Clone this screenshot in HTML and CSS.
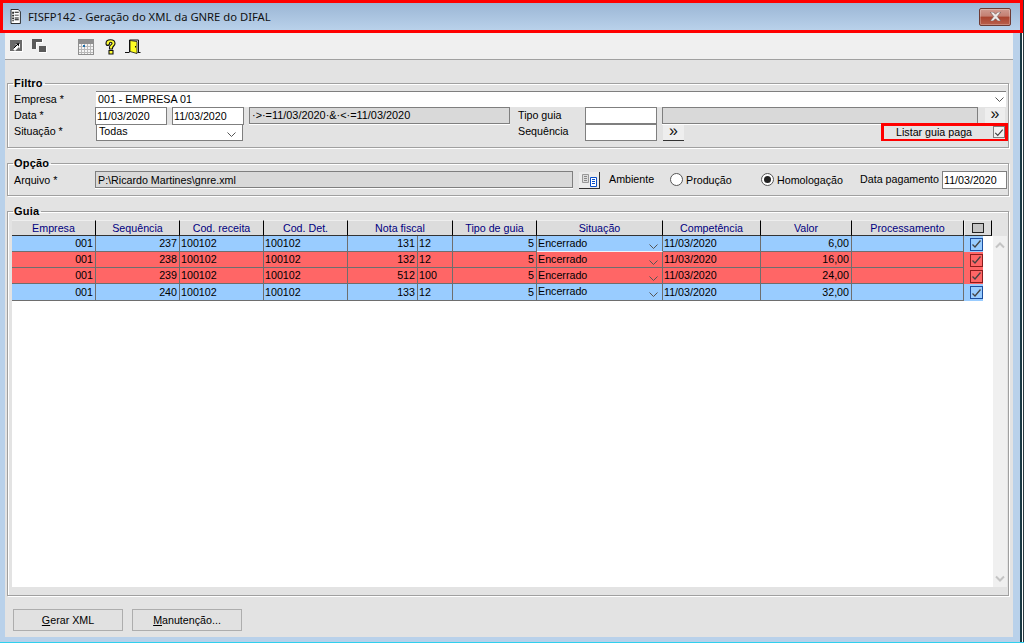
FILE: index.html
```html
<!DOCTYPE html>
<html lang="pt">
<head>
<meta charset="utf-8">
<title>FISFP142</title>
<link rel="stylesheet" href="styles.css">
</head>
<body>
<div class="window">
  <header class="titlebar">
    <svg class="doc-icon" width="13" height="15" viewBox="0 0 16 16" preserveAspectRatio="none"><path d="M2.500.5h9l2.500 2.500v12.500h-11.500z" fill="#fff" stroke="#111"/><path d="M4 3h2v2h-2zM7 3h5v1h-5zM4 6h2v2h-2zM7 6h5v1h-5zM4 9h2v2h-2zM7 9h5v1h-5zM7 11h5v1h-5zM4 12h2v1h-2z" fill="#111"/></svg>
    <span class="title-text">FISFP142 - Geração do XML da GNRE do DIFAL</span>
    <button class="close" aria-label="Fechar"><svg width="13" height="9" viewBox="0 0 14 10"><path d="M1 0h3.500l2.500 2.500 2.500-2.500h3.500l-4 5 4 5h-3.500l-2.500-2.500-2.500 2.500h-3.500l4-5z" fill="#eeeae8" stroke="#6e5550" stroke-width=".7"/></svg></button>
  </header>
  <div class="frame">
    <nav class="toolbar">
      <svg class="ti ti-a" width="14" height="14" viewBox="0 0 14 14"><path d="M0 1h12v11h-12z" fill="#6a6a6a"/><path d="M12 1h1v12h-13v-1h12z" fill="#fff"/><path d="M3 10l4-4-2-1h5v5l-1-2-4 4z" fill="#fff"/><path d="M3.500 9.500l5-5" stroke="#000" stroke-width="1"/><path d="M6 4.500h3v3z" fill="#000"/></svg>
      <svg class="ti ti-b" width="15" height="15" viewBox="0 0 15 15"><path d="M0 0h10v3h-6v7h-4z" fill="#5a5a5a"/><path d="M4 3h6v-3h1v4h-6v6h-1z" fill="#fff"/><path d="M7 7h7v6h-7z" fill="#5a5a5a"/><path d="M14 7h1v7h-8v-1h7z" fill="#fff"/></svg>
      <svg class="ti ti-c" width="16" height="16" viewBox="0 0 16 16"><path d="M0 0h16v16h-16z" fill="#8f8f8f"/><path d="M1 5h14v10h-14z" fill="#f4f4f4"/><path d="M3.500 5v10M6.500 5v10M9.500 5v10M12.500 5v10M1 7.500h14M1 10.500h14M1 13.500h14" stroke="#b8b8b8" fill="none"/><path d="M5 6h2v2h-2z" fill="#1c6ea8"/></svg>
      <svg class="ti ti-d" width="13" height="16" viewBox="0 0 12 16"><path d="M3.500 6.500c-1.300 0-2-.7-2-2 0-2.300 2-3.800 4.500-3.800s4.500 1.500 4.500 3.800c0 2.200-2.500 2.700-2.500 4.500v1h-3v-2c0-2 2.500-2.500 2.500-3.500 0-.8-.6-1.300-1.500-1.300-1 0-1 1-1 1.300 0 .8-.8 2-2.500 2zM4.500 11.500h4v3.500h-4z" fill="#ffff33" stroke="#111" stroke-width="1.100"/></svg>
      <svg class="ti ti-e" width="16" height="16" viewBox="0 0 16 16"><path d="M4.500 13v-12h9v12" fill="none" stroke="#111"/><path d="M5 1.500l7 1v12l-7-2z" fill="#ffff22" stroke="#111" stroke-width=".8"/><path d="M0 13.500h4.500M12.500 13.500h3" stroke="#111"/><path d="M10 7h1v1.500h-1z" fill="#111"/></svg>
    </nav>
    <main class="main">
      <fieldset class="group group-filtro">
        <legend>Filtro</legend>
        <div class="row row-a">
          <label class="lbl">Empresa *</label>
          <div class="field field-empresa">001 - EMPRESA 01<svg class="chev" width="9" height="5" viewBox="0 0 9 5"><path d="M.5.500l4 4 4-4" fill="none" stroke="#555"/></svg></div>
        </div>
        <div class="row row-b">
          <label class="lbl lbl-data">Data *</label>
          <div class="field date">11/03/2020</div>
          <div class="field date">11/03/2020</div>
          <div class="field off range">·&gt;·=11/03/2020·&amp;·&lt;·=11/03/2020</div>
          <label class="lbl2 lbl-down">Tipo guia</label>
          <div class="field small"></div>
          <div class="field off tipo-desc"></div>
          <button class="more more-a">»</button>
        </div>
        <div class="row row-c">
          <label class="lbl lbl-up">Situação *</label>
          <div class="field field-sit">Todas<svg class="chev" width="9" height="5" viewBox="0 0 9 5"><path d="M.5.500l4 4 4-4" fill="none" stroke="#555"/></svg></div>
          <label class="lbl2 lbl-seq">Sequência</label>
          <div class="field small"></div>
          <button class="more more-b">»</button>
          <div class="listar"><span>Listar guia paga</span><span class="cb-plain"><svg width="12" height="11" viewBox="0 0 12 11"><path d="M1.500 6l3 3 6-7" fill="none" stroke="#444" stroke-width="1.400"/></svg></span></div>
        </div>
      </fieldset>

      <fieldset class="group group-opcao">
        <legend>Opção</legend>
        <div class="opcao">
          <label class="lbl lbl-arq">Arquivo *</label>
          <div class="field off file">P:\Ricardo Martines\gnre.xml</div>
          <button class="browse" aria-label="Procurar"><svg width="15" height="13" viewBox="0 0 15 13"><path d="M.5.500h6v8h-6z" fill="#ddd" stroke="#999"/><path d="M2 2.500h3M2 4.500h3M2 6.500h3" stroke="#888"/><path d="M8.500 3.500h6v9h-6z" fill="#fff" stroke="#0a4ec8"/><path d="M10 5.500h3M10 7.500h3M10 9.500h3" stroke="#0a4ec8"/></svg></button>
          <span class="amb">Ambiente</span>
          <span class="radio radio-a"></span><span class="rlabel rl-a">Produção</span>
          <span class="radio radio-b on"></span><span class="rlabel rl-b">Homologação</span>
          <span class="dpag">Data pagamento</span>
          <div class="field date date-pag">11/03/2020</div>
        </div>
      </fieldset>

      <fieldset class="group group-guia">
        <legend>Guia</legend>
        <div class="guia">
          <div class="grid">
            <div class="hd">Empresa</div>
            <div class="hd">Sequência</div>
            <div class="hd">Cod. receita</div>
            <div class="hd">Cod. Det.</div>
            <div class="hd span2">Nota fiscal</div>
            <div class="hd">Tipo de guia</div>
            <div class="hd">Situação</div>
            <div class="hd">Competência</div>
            <div class="hd">Valor</div>
            <div class="hd">Processamento</div>
            <div class="hd hd-check"><span class="hd-box"></span></div>

            <div class="c blue r">001</div><div class="c blue r">237</div><div class="c blue">100102</div><div class="c blue">100102</div><div class="c blue r">131</div><div class="c blue">12</div><div class="c blue r">5</div><div class="c blue sit first">Encerrado<svg class="chev" width="9" height="5" viewBox="0 0 9 5"><path d="M.5.500l4 4 4-4" fill="none" stroke="#555"/></svg></div><div class="c blue">11/03/2020</div><div class="c blue r">6,00</div><div class="c blue"></div><div class="chk"><span class="chk-fill blue"><span class="cb cb-blue"><svg width="11" height="10" viewBox="0 0 11 10"><path d="M1.500 5.500l2.500 2.500 5.500-6.500" fill="none" stroke="#444" stroke-width="1.300"/></svg></span></span></div>

            <div class="c red r">001</div><div class="c red r">238</div><div class="c red">100102</div><div class="c red">100102</div><div class="c red r">132</div><div class="c red">12</div><div class="c red r">5</div><div class="c red sit">Encerrado<svg class="chev" width="9" height="5" viewBox="0 0 9 5"><path d="M.5.500l4 4 4-4" fill="none" stroke="#555"/></svg></div><div class="c red">11/03/2020</div><div class="c red r">16,00</div><div class="c red"></div><div class="chk"><span class="chk-fill red"><span class="cb cb-red"><svg width="11" height="10" viewBox="0 0 11 10"><path d="M1.500 5.500l2.500 2.500 5.500-6.500" fill="none" stroke="#444" stroke-width="1.300"/></svg></span></span></div>

            <div class="c red r">001</div><div class="c red r">239</div><div class="c red">100102</div><div class="c red">100102</div><div class="c red r">512</div><div class="c red">100</div><div class="c red r">5</div><div class="c red sit">Encerrado<svg class="chev" width="9" height="5" viewBox="0 0 9 5"><path d="M.5.500l4 4 4-4" fill="none" stroke="#555"/></svg></div><div class="c red">11/03/2020</div><div class="c red r">24,00</div><div class="c red"></div><div class="chk"><span class="chk-fill red"><span class="cb cb-red"><svg width="11" height="10" viewBox="0 0 11 10"><path d="M1.500 5.500l2.500 2.500 5.500-6.500" fill="none" stroke="#444" stroke-width="1.300"/></svg></span></span></div>

            <div class="c blue r">001</div><div class="c blue r">240</div><div class="c blue">100102</div><div class="c blue">100102</div><div class="c blue r">133</div><div class="c blue">12</div><div class="c blue r">5</div><div class="c blue sit">Encerrado<svg class="chev" width="9" height="5" viewBox="0 0 9 5"><path d="M.5.500l4 4 4-4" fill="none" stroke="#555"/></svg></div><div class="c blue">11/03/2020</div><div class="c blue r">32,00</div><div class="c blue"></div><div class="chk"><span class="chk-fill blue"><span class="cb cb-blue"><svg width="11" height="10" viewBox="0 0 11 10"><path d="M1.500 5.500l2.500 2.500 5.500-6.500" fill="none" stroke="#444" stroke-width="1.300"/></svg></span></span></div>
          </div>
          <div class="scroll">
            <svg width="10" height="7" viewBox="0 0 10 7"><path d="M1 5.500l4-4 4 4" fill="none" stroke="#c4c4c4" stroke-width="2"/></svg>
            <svg width="10" height="7" viewBox="0 0 10 7"><path d="M1 1.500l4 4 4-4" fill="none" stroke="#c4c4c4" stroke-width="2"/></svg>
          </div>
        </div>
      </fieldset>

      <div class="actions">
        <button class="btn"><u>G</u>erar XML</button>
        <button class="btn"><u>M</u>anutenção...</button>
      </div>
    </main>
  </div>
</div>
</body>
</html>
```
FILE: styles.css
```css
* { box-sizing: border-box; }
html, body { margin: 0; padding: 0; }
body {
  width: 1024px;
  height: 643px;
  overflow: hidden;
  background: #fff;
  font-family: "Liberation Sans", Arial, sans-serif;
  font-size: 10.700px;
  color: #000;
}
.window {
  width: 1024px;
  height: 643px;
  display: flex;
  flex-direction: column;
  background: #b9d1ea;
  border-bottom: 1px solid #2fd0ee;
  box-shadow: inset -1px 0 0 #2a3a40, inset -2px 0 0 #fff, inset -4px 0 0 #1a3a44;
}
.titlebar {
  height: 33px;
  flex: none;
  display: flex;
  align-items: center;
  width: 1023px;
  border: 3px solid #f00;
  padding: 0 9px 0 6px;
  background: linear-gradient(#9bb6d5, #b9d1ea);
}
.doc-icon { flex: none; }
.title-text {
  margin-left: 6px;
  font-family: "Noto Sans", "Open Sans", sans-serif;
  font-size: 11.250px;
  color: #111;
}
.close {
  margin-left: auto;
  width: 32px;
  height: 18px;
  padding: 0;
  border: 1px solid #6e3a33;
  border-radius: 2px;
  background: linear-gradient(#cf9b90 0, #c47f72 45%, #a9432f 50%, #b9604c 100%);
  display: flex;
  align-items: center;
  justify-content: center;
  box-shadow: inset 0 0 0 1px rgba(255,255,255,.25);
}
.frame {
  flex: 1;
  display: flex;
  flex-direction: column;
  margin: 0 11px 5px 5px;
  background: #e3e3e3;
  min-height: 0;
}
.toolbar {
  height: 27px;
  flex: none;
  display: flex;
  align-items: flex-start;
  background: #f0f0f0;
  border-bottom: 1px solid #a0a0a0;
}
.ti { flex: none; margin-top: 6px; }
.ti-a { margin-left: 5px; }
.ti-b { margin-left: 8px; }
.ti-c { margin-left: 31px; }
.ti-d { margin-left: 10px; }
.ti-e { margin-left: 8px; }
.main {
  flex: 1;
  display: flex;
  flex-direction: column;
  padding: 17px 4px 0 2px;
  min-height: 0;
}
.group {
  margin: 0;
  padding: 0;
  min-width: 0;
  border: 1px solid #a0a0a0;
  box-shadow: 1px 1px 0 #fff, inset 1px 1px 0 #fff;
}
.group legend {
  margin-left: 5px;
  padding: 0 2px 0 1px;
  font-weight: bold;
  font-size: 11px;
  letter-spacing: .2px;
  line-height: 13px;
  height: 13px;
}
.group-filtro { height: 71px; }
.group-opcao { height: 39px; margin-top: 9px; }
.group-guia { height: 391px; margin-top: 9px; }

.row { display: flex; align-items: flex-start; }
.row-a { height: 16px; margin-top: 1px; }
.row-b { height: 17px; }
.row-c { height: 17px; }
.lbl {
  flex: none;
  width: 88px;
  padding: 2px 0 0 6px;
  line-height: 13px;
}
.lbl-up { padding-top: 1px; }
.lbl-data { width: 87px; }
.lbl-arq { width: 87px; padding-top: 3px; }
.lbl2 {
  flex: none;
  width: 67px;
  margin-left: 8px;
  line-height: 13px;
  padding-top: 1px;
}
.lbl-down { padding-top: 2px; }
.lbl-seq { margin-left: 275px; }
.field {
  flex: none;
  background: #fff;
  border: 1px solid #7f7f7f;
  line-height: 14px;
  padding-left: 2px;
  white-space: nowrap;
  overflow: hidden;
}
.off { background: #d9d9d9; box-shadow: 0 1px 0 #fff; }
.field-empresa {
  width: 910px;
  height: 16px;
  border-width: 1px 0 0;
  display: flex;
  align-items: flex-start;
  line-height: 15px;
}
.date { width: 72px; height: 18px; line-height: 16px; padding-left: 1px; }
.date + .date, .date + .range { margin-left: 5px; }
.range { width: 261px; height: 17px; line-height: 15px; margin-left: 5px; font-size: 10.900px; }
.small { width: 72px; height: 17px; }
.tipo-desc { width: 316px; height: 17px; margin-left: 5px; }
.more {
  flex: none;
  padding: 0 0 4px;
  border: 0;
  border-bottom: 1px solid #333;
  background: #eeeeee;
  font-family: "Liberation Sans", sans-serif;
  font-size: 16px;
  line-height: 10px;
  height: 16px;
  color: #111;
}
.more-a { width: 20px; margin: 1px 0 0 7px; }
.more-b { width: 21px; margin: 1px 0 0 6px; }
.field-sit {
  width: 147px;
  height: 16px;
  border-top: 0;
  line-height: 13px;
  margin-top: 1px;
  display: flex;
}
.chev { flex: none; margin-left: auto; margin-top: 5px; }
.field-empresa .chev { margin-right: 2px; margin-top: 5px; }
.field-sit .chev { margin-right: 6px; margin-top: 7px; }
.listar {
  flex: none;
  width: 127px;
  height: 18px;
  margin: -1px 0 0 197px;
  border-style: solid;
  border-color: #f00;
  border-width: 3px 3px 2px;
  display: flex;
  align-items: flex-start;
  padding-left: 12px;
  line-height: 12px;
  white-space: nowrap;
}
.cb-plain {
  margin-left: auto;
  width: 12px;
  height: 12px;
  border: 1px solid #7f7f7f;
  background: #f2f2f2;
  display: flex;
  align-items: center;
  justify-content: center;
}
.opcao { display: flex; align-items: flex-start; margin-top: 1px; }
.file { width: 478px; height: 17px; line-height: 16px; }
.browse {
  flex: none;
  width: 21px;
  height: 17px;
  margin: 1px 0 0 6px;
  padding: 0;
  border: 0;
  border-right: 1px solid #333;
  border-bottom: 1px solid #333;
  background: #ececec;
  display: flex;
  align-items: center;
  justify-content: center;
}
.amb { flex: none; margin-left: 9px; line-height: 13px; width: 61px; padding-top: 2px; }
.radio {
  flex: none;
  width: 13px;
  height: 13px;
  margin-top: 2px;
  border-radius: 50%;
  border: 1px solid #555;
  background: #fff;
  display: flex;
  align-items: center;
  justify-content: center;
}
.radio.on::after {
  content: "";
  width: 7px;
  height: 7px;
  border-radius: 50%;
  background: #222;
}
.rlabel { flex: none; margin-left: 3px; line-height: 13px; padding-top: 3px; white-space: nowrap; }
.rl-a { width: 75px; }
.rl-b { width: 83px; }
.dpag { flex: none; line-height: 13px; padding-top: 2px; width: 82px; white-space: nowrap; }
.date-pag { width: 65px; }

.guia { display: flex; margin: 2px 0 0 4px; height: 367px; }
.grid {
  width: 981px;
  height: 367px;
  display: grid;
  grid-template-columns: 84px 84px 84px 84px 70px 35px 84px 126px 98px 91px 112px 28px;
  grid-template-rows: 16px 16px 16px 16px 17px 1fr;
  background: linear-gradient(#e3e3e3 16px, #fff 16px);
}
.hd {
  background: #dcdcdc;
  color: #000080;
  border-right: 1px solid #000;
  border-bottom: 1px solid #333;
  border-top: 1px solid #eee;
  text-align: center;
  line-height: 14px;
}
.span2 { grid-column: span 2; }
.hd-check { display: flex; align-items: center; justify-content: center; border-left: 1px solid #eee; }
.hd-box { width: 12px; height: 10px; background: #c4c4c4; border: 1px solid #222; }
.c {
  display: flex;
  align-items: center;
  padding: 0 1px;
  border-right: 1px solid #6e6e6e;
  border-bottom: 1px solid #6e6e6e;
  min-width: 0;
  line-height: 13px;
  white-space: nowrap;
}
.r { justify-content: flex-end; padding-right: 2px; }
.blue { background: #99ccff; }
.red { background: #ff6666; }
.sit { align-items: flex-start; padding-top: 1px; }
.sit .chev { margin-right: 3px; margin-top: 7px; }
.first { border-bottom-color: #eef3fa; }
.chk { display: flex; }
.chk-fill { width: 19px; display: flex; align-items: center; justify-content: center; }
.cb { width: 13px; height: 13px; border: 1px solid #333; display: flex; align-items: center; justify-content: center; margin-left: 5px; }
.cb-blue { border-color: #1c4fa0; }
.cb-red { border-color: #8a1c1c; }
.scroll {
  width: 14px;
  margin: 16px 0 0 0;
  background: #f0f0f0;
  display: flex;
  flex-direction: column;
  justify-content: space-between;
  align-items: center;
  padding: 6px 0 5px;
}
.actions { display: flex; gap: 9px; margin: 13px 0 0 6px; }
.btn {
  width: 110px;
  height: 22px;
  padding: 0;
  border: 1px solid #adadad;
  background: #e1e1e1;
  font-family: "Liberation Sans", sans-serif;
  font-size: 10.700px;
  color: #000;
}
```
